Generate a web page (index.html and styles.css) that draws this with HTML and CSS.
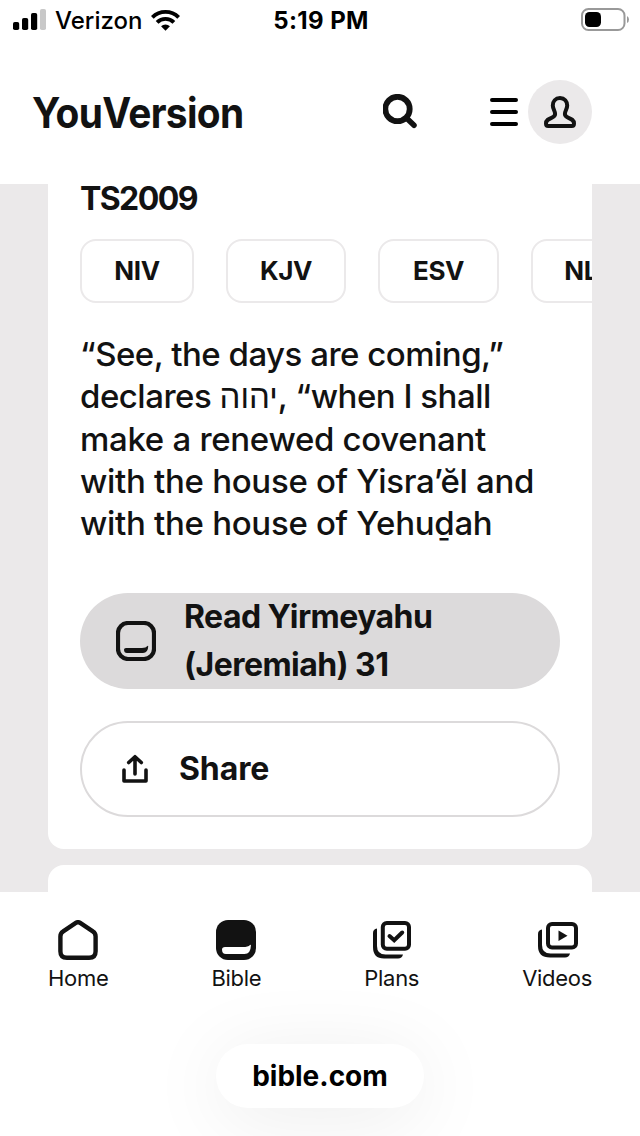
FILE: index.html
```html
<!DOCTYPE html>
<html lang="en">
<head>
<meta charset="utf-8">
<title>YouVersion</title>
<link rel="stylesheet" href="styles.css">
</head>
<body>
<div class="screen">

	<div class="status">
		<div class="carrier">
			<svg class="signal" width="33" height="22" viewBox="0 0 33 22">
				<rect x="0" y="13" width="6.200" height="8" rx="1.800"/>
				<rect x="9" y="9" width="6.200" height="12" rx="1.800"/>
				<rect x="18" y="4" width="6.200" height="17" rx="1.800"/>
				<rect x="27" y="0" width="6" height="21" rx="1.800" fill="#c8c8c8"/>
			</svg>
			<span>Verizon</span>
			<svg class="wifi" width="29" height="22" viewBox="0 0 30 22" fill="none" stroke="#000" stroke-width="4">
				<path d="M1.4 8.2a19.3 19.3 0 0 1 27.2 0"/>
				<path d="M6.3 13.4a12.3 12.3 0 0 1 17.4 0"/>
				<path d="M15 22l-4.6-4.6a6.6 6.6 0 0 1 9.2 0z" fill="#000" stroke="none"/>
			</svg>
		</div>
		<div class="time">5:19 PM</div>
		<svg class="battery" width="48" height="24" viewBox="0 0 48 24">
			<rect x="1" y="1" width="42.500" height="21" rx="6.500" fill="none" stroke="#999" stroke-width="2"/>
			<rect x="4" y="4" width="16" height="15" rx="4.500"/>
			<path d="M46 8q2 1 2 3.500t-2 3.500z" fill="#999"/>
		</svg>
	</div>

	<header class="header">
		<div class="logo"><span>YouVersion</span></div>
		<svg class="search" width="36" height="36" viewBox="0 0 36 36" fill="none" stroke="#121212">
			<circle cx="14.500" cy="15" r="12.200" stroke-width="5.800"/>
			<path d="M24.500 25l6.500 6.300" stroke-width="5.500" stroke-linecap="round"/>
		</svg>
		<svg class="menu" width="28" height="28" viewBox="0 0 28 28" stroke="#000" stroke-width="4" stroke-linecap="round">
			<path d="M2 2h24M2 14h24M2 26h24"/>
		</svg>
		<div class="avatar">
			<svg width="34" height="34" viewBox="0 0 34 34" fill="none" stroke="#121212" stroke-width="4" stroke-linejoin="round">
				<path d="M17 3c-4.600 0-7.200 3.400-7.200 7.500 0 3.500 2.300 5.400 2.300 8.500 0 2-1.500 3-3.600 3.800C5.500 24 3 25 3 28.500 3 30.300 3.800 31 5.200 31h23.600c1.400 0 2.200-.7 2.200-2.500 0-3.500-2.500-4.500-5.500-5.700-2.100-.8-3.600-1.800-3.600-3.800 0-3.100 2.300-5 2.300-8.500C24.200 6.400 21.600 3 17 3z"/>
			</svg>
		</div>
	</header>

	<main class="feed">
		<section class="card verse">
			<h2>TS2009</h2>
			<div class="versions">
				<div class="version niv">NIV</div>
				<div class="version kjv">KJV</div>
				<div class="version esv">ESV</div>
				<div class="version nlt">NLT</div>
			</div>
			<p class="text">
				<span class="tight">“See, the days are coming,”</span><br>
				<span class="tight">declares <span class="hebrew">יהוה</span>, “when I shall</span><br>
				<span>make a renewed covenant</span><br>
				<span>with the house of Yisra’ĕl and</span><br>
				<span>with the house of Yehuḏah</span>
			</p>
			<div class="button read">
				<svg width="40" height="40" viewBox="0 0 40 40">
					<rect x="2" y="2" width="36" height="36" rx="10" fill="none" stroke="#121212" stroke-width="4.200"/>
					<path d="M8 28.500q0-1.500 2-1.500h16q4 0 5.500-2 .8-.5.700.500-.2 6.500-5.200 6.500H11q-3 0-3-3.500z" fill="#121212"/>
				</svg>
				<span>Read Yirmeyahu<br>(Jeremiah) 31</span>
			</div>
			<div class="button share">
				<svg width="26" height="30" viewBox="0 0 26 30" fill="none" stroke="#121212" stroke-width="3.600" stroke-linecap="round" stroke-linejoin="round">
					<path d="M2 16v11h22V16M13 20V3M6.700 8.500L13 2.700l6.300 5.800"/>
				</svg>
				<span>Share</span>
			</div>
		</section>
		<section class="card"></section>
	</main>

	<nav class="tabs">
		<div class="tab">
			<svg width="40" height="40" viewBox="0 0 40 40" fill="none" stroke="#121212" stroke-width="4.400">
				<path d="M17.800 2.900q2.200-1.400 4.400 0l12.600 8.500q2.800 1.800 2.800 5v14.800q0 6.500-6.500 6.500H8.900q-6.500 0-6.500-6.500V16.400q0-3.200 2.800-5z"/>
			</svg>
			<span>Home</span>
		</div>
		<div class="tab">
			<svg width="40" height="40" viewBox="0 0 40 40">
				<rect width="40" height="40" rx="12" fill="#121212"/>
				<path d="M6 29.500q0-2.500 3-2.500h18q5 0 7-2 1-.5.900.5-.2 8.500-6.400 8.500H10q-4 0-4-4.500z" fill="#fff"/>
			</svg>
			<span>Bible</span>
		</div>
		<div class="tab">
			<svg width="38" height="40" viewBox="0 0 38 40" fill="none" stroke="#121212">
				<rect x="9.800" y="3" width="26.200" height="25.800" rx="4" stroke-width="4"/>
				<path d="M16.500 16l4.700 4.300 8-7.800" stroke-width="4" stroke-linecap="round"/>
				<path d="M0 13q0-4 4-4.500V26q0 8.500 8.500 8.500H30q-1 4-5 4H11Q0 38.500 0 27z" fill="#121212" stroke="none"/>
			</svg>
			<span>Plans</span>
		</div>
		<div class="tab videos">
			<svg width="40" height="40" viewBox="0 0 40 40" fill="none" stroke="#121212">
				<rect x="10" y="4" width="28" height="23.500" rx="4" stroke-width="4"/>
				<path d="M20.500 10.500v10.500l9-5.200z" fill="#121212" stroke="none"/>
				<path d="M0 14q0-4 4-4.500V25q0 8.500 8.500 8.500H32q-1 4-5 4H12Q0 37.500 0 26z" fill="#121212" stroke="none"/>
			</svg>
			<span>Videos</span>
		</div>
	</nav>

	<footer class="bottom">
		<div class="address">bible.com</div>
	</footer>

</div>
</body>
</html>
```

FILE: styles.css
```css
* {
box-sizing: border-box;
}
body {
margin: 0;
background: #fff;
color: #121212;
font-family: Inter, "Liberation Sans", sans-serif;
}
svg {
display: block;
flex: none;
}
.screen {
width: 640px;
height: 1136px;
overflow: hidden;
display: flex;
flex-direction: column;
}

/* status bar */
.status {
height: 40px;
flex: none;
display: grid;
grid-template-columns: 1fr 100px 1fr;
align-items: center;
padding: 0 11px 0 13px;
color: #000;
font-size: 24px;
}
.carrier {
display: flex;
align-items: center;
font-weight: 500;
}
.carrier span {
margin: 1px 9px 0 9px;
}
.time {
font-weight: 700;
letter-spacing: 0.4px;
white-space: nowrap;
justify-self: center;
padding-top: 1px;
}
.battery {
justify-self: end;
}

/* header */
.header {
height: 144px;
flex: none;
display: flex;
align-items: center;
padding: 0 48px 0 32px;
}
.logo {
width: 351px;
font-size: 42px;
font-weight: 650;
letter-spacing: -0.7px;
}
.logo span {
display: inline-block;
transform: scaleX(0.925);
transform-origin: left;
}
.menu {
margin: 0 10px 0 71px;
}
.avatar {
width: 64px;
height: 64px;
border-radius: 50%;
background: #ebe9ea;
display: flex;
align-items: center;
justify-content: center;
}

/* feed */
.feed {
height: 708px;
flex: none;
overflow: hidden;
background: #ebe9ea;
padding: 0 48px;
}
.card {
height: 100px;
background: #fff;
border-radius: 16px;
overflow: hidden;
}
.verse {
height: 665px;
margin-bottom: 16px;
padding: 0 32px;
border-radius: 0 0 16px 16px;
}
.verse h2 {
margin: 0;
height: 55px;
line-height: 29px;
font-size: 32px;
font-weight: 700;
letter-spacing: -1.6px;
}
.versions {
display: flex;
gap: 32px;
height: 64px;
}
.version {
flex: none;
border: 2px solid #ebe9ea;
border-radius: 16px;
font-size: 26px;
font-weight: 700;
letter-spacing: -0.4px;
line-height: 60px;
text-align: center;
}
.niv {
width: 114px;
}
.kjv {
width: 120px;
}
.esv {
width: 121px;
}
.nlt {
width: 115px;
}
.text {
margin: 30px 0 0;
height: 260px;
font-size: 33px;
font-weight: 450;
line-height: 42px;
letter-spacing: -0.3px;
white-space: nowrap;
}
.tight {
letter-spacing: -0.5px;
}
.hebrew {
font-family: "Liberation Sans", "DejaVu Sans", sans-serif;
letter-spacing: 0;
}
.button {
height: 96px;
border-radius: 48px;
display: flex;
align-items: center;
font-size: 32px;
line-height: 48px;
font-weight: 700;
}
.read {
background: #dcdadb;
padding-left: 36px;
gap: 28px;
letter-spacing: -0.55px;
}
.share {
margin-top: 32px;
border: 2px solid #dcdadb;
padding-left: 40px;
gap: 31px;
letter-spacing: -0.1px;
}

/* bottom tabs */
.tabs {
height: 128px;
flex: none;
display: flex;
justify-content: space-between;
padding: 28px 48px 0;
}
.tab {
display: flex;
flex-direction: column;
align-items: center;
font-size: 22px;
line-height: 30px;
letter-spacing: -0.3px;
}
.tab span {
margin-top: 3px;
}
.videos svg {
margin-left: 2px;
}

/* address pill */
.bottom {
flex: none;
height: 116px;
padding-top: 24px;
}
.address {
width: 208px;
height: 64px;
margin: 0 auto;
border-radius: 32px;
background: #fff;
box-shadow: 0 10px 80px rgba(0, 0, 0, 0.08);
color: #000;
font-size: 28px;
font-weight: 650;
line-height: 64px;
text-align: center;
}
```
